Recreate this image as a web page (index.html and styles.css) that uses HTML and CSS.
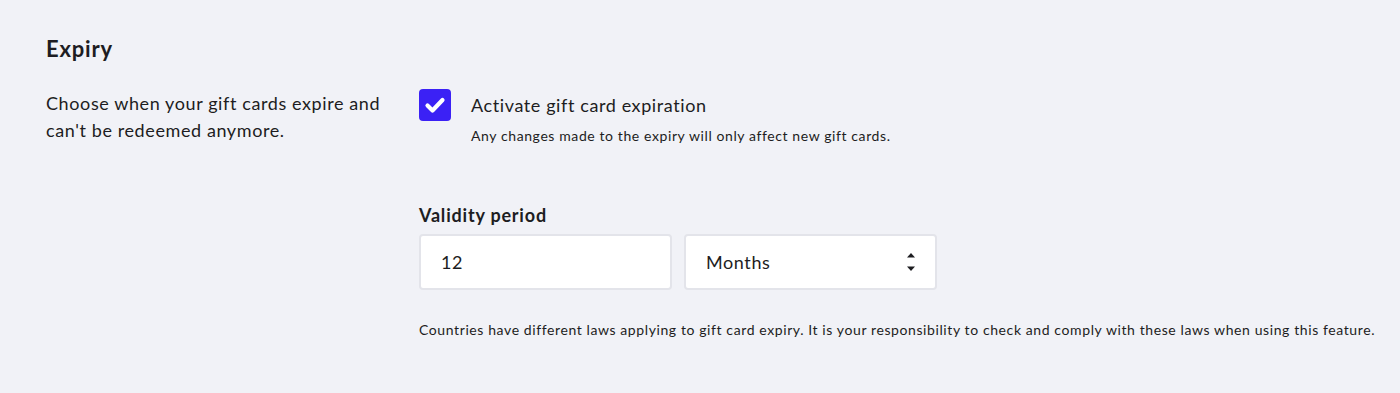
FILE: index.html
```html
<!DOCTYPE html>
<html lang="en">
<head>
<meta charset="utf-8">
<title>Expiry</title>
<link rel="stylesheet" href="styles.css">
</head>
<body>
<section class="section">
  <h2 class="title">Expiry</h2>
  <div class="row">
    <p class="desc">Choose when your gift cards expire and can't be redeemed anymore.</p>
    <div class="settings">
      <div class="check-row">
        <span class="checkbox">
          <svg viewBox="0 0 32 32" width="32" height="32" aria-hidden="true">
            <path d="M8.5 16.5 L13.5 21.5 L23.5 11" fill="none" stroke="#fff" stroke-width="4.2" stroke-linecap="round" stroke-linejoin="round"/>
          </svg>
        </span>
        <div class="check-text">
          <div class="check-label">Activate gift card expiration</div>
          <div class="check-hint">Any changes made to the expiry will only affect new gift cards.</div>
        </div>
      </div>
      <div class="field-label">Validity period</div>
      <div class="fields">
        <div class="input">12</div>
        <div class="input select">
          <span>Months</span>
          <svg class="arrows" viewBox="0 0 10 20" width="10" height="20" aria-hidden="true">
            <path d="M1 5.5 L5 1 L9 5.5 Z" fill="#1d1d21"/>
            <path d="M1 14.5 L5 19 L9 14.5 Z" fill="#1d1d21"/>
          </svg>
        </div>
      </div>
      <p class="note">Countries have different laws applying to gift card expiry. It is your responsibility to check and comply with these laws when using this feature.</p>
    </div>
  </div>
</section>
</body>
</html>
```

FILE: styles.css
```css
html, body {
  margin: 0;
  padding: 0;
  background: #f1f2f7;
}
body {
  font-family: Lato, "Open Sans", sans-serif;
  color: #1d1d22;
  letter-spacing: 0.6px;
}
.section {
  padding: 36px 0 0 46px;
}
.title {
  margin: 0;
  font-size: 22px;
  line-height: 26px;
  font-weight: 700;
  letter-spacing: 0.8px;
}
.row {
  display: grid;
  grid-template-columns: 373px 1fr;
  margin-top: 27px;
}
.desc {
  margin: 0;
  font-size: 18px;
  line-height: 27px;
  padding-top: 1px;
  padding-right: 10px;
}
.check-row {
  display: flex;
  gap: 20px;
  align-items: flex-start;
}
.checkbox {
  width: 32px;
  height: 32px;
  flex: none;
  background: #3b21f5;
  border-radius: 4px;
  display: flex;
}
.check-label {
  font-size: 18px;
  line-height: 32px;
}
.check-hint {
  font-size: 14px;
  line-height: 20px;
  margin-top: 5px;
}
.field-label {
  margin-top: 57px;
  font-size: 18px;
  line-height: 24px;
  font-weight: 700;
  letter-spacing: 0.8px;
}
.fields {
  display: flex;
  gap: 12px;
  margin-top: 7px;
}
.input {
  box-sizing: border-box;
  width: 253px;
  height: 56px;
  background: #fff;
  border: 2px solid #e3e4ea;
  border-radius: 4px;
  padding: 0 20px;
  display: flex;
  align-items: center;
  font-size: 18px;
}
.select {
  justify-content: space-between;
  padding-right: 19px;
}
.arrows {
  display: block;
}
.note {
  margin: 30px 0 0;
  font-size: 14px;
  line-height: 20px;
}
```
